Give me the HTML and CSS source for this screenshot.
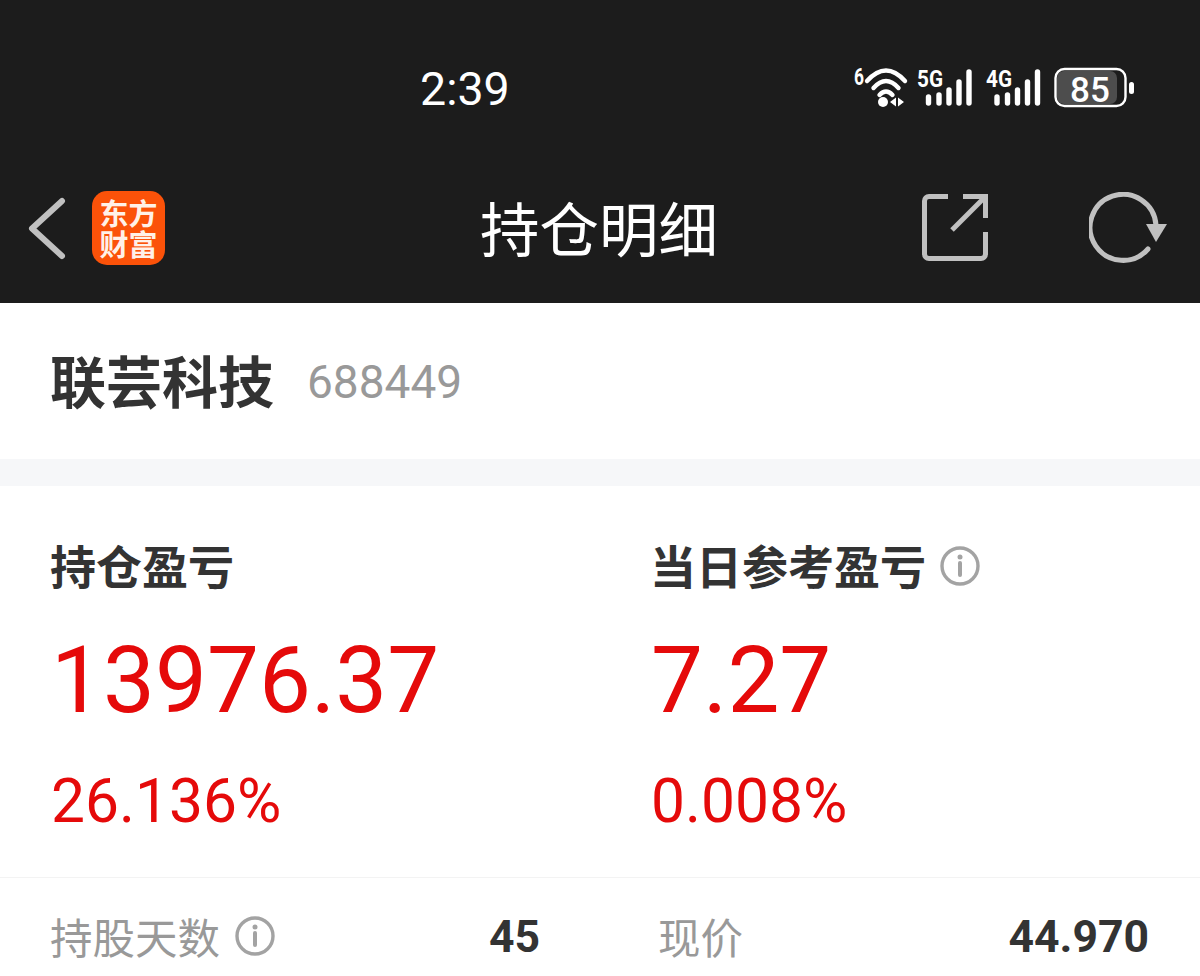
FILE: index.html
```html
<!DOCTYPE html>
<html lang="zh-CN">
<head>
<meta charset="utf-8">
<title>持仓明细</title>
<link rel="stylesheet" href="styles.css">
</head>
<body>
<header class="top">
  <div class="status">
    <span class="time">2:39</span>
    <svg class="status-icons" width="286" height="49" viewBox="850 63 286 49">
      <g class="sb-text">
        <text x="854" y="85" class="sb-small" textLength="10" lengthAdjust="spacingAndGlyphs">6</text>
        <text x="917" y="87" class="sb-small" textLength="26" lengthAdjust="spacingAndGlyphs">5G</text>
        <text x="986" y="87" class="sb-small" textLength="26" lengthAdjust="spacingAndGlyphs">4G</text>
      </g>
      <g class="wifi">
        <path d="M867 81Q886 60 905 81"/>
        <path d="M873.500 88Q886 74 898.500 88"/>
        <path d="M879.500 95Q886 88 892.500 95"/>
      </g>
      <circle cx="883" cy="102" r="5" fill="#fff"/>
      <path d="M896 97.500V106.500L890 102Z M898 97.500V106.500L904 102Z" fill="#fff"/>
      <g class="bars">
        <path d="M928.500 97V103"/><path d="M939 95V103"/><path d="M949 90V103"/><path d="M959 82V103"/><path d="M969 72V103"/>
        <path d="M997 97V103"/><path d="M1007.500 95V103"/><path d="M1017.500 90V103"/><path d="M1027.500 82V103"/><path d="M1037.500 72V103"/>
      </g>
      <rect x="1057" y="71" width="60" height="33" rx="7" fill="#4d4d4d"/>
      <rect x="1055.500" y="69" width="70" height="37" rx="9" fill="none" stroke="#fff" stroke-width="2.400"/>
      <text x="1090" y="102" class="sb-batt" text-anchor="middle">85</text>
      <rect x="1129" y="82" width="5" height="12" rx="2.500" fill="#fff"/>
    </svg>
  </div>
  <nav class="nav">
    <svg class="back" width="40" height="64" viewBox="26 196 40 64">
      <path d="M62 201L32 228.500L62 256"/>
    </svg>
    <div class="logo">东方财富</div>
    <h1 class="title">持仓明细</h1>
    <svg class="share" width="70" height="70" viewBox="920 193 70 70">
      <path d="M948 197.500H929A4.500 4.500 0 0 0 924.500 202V255A4.500 4.500 0 0 0 929 259.500H981A4.500 4.500 0 0 0 985.500 255V233"/>
      <path d="M963 197.500H985.500V219"/>
      <path d="M952 231L984 199"/>
    </svg>
    <svg class="refresh" width="80" height="72" viewBox="1089 193 80 72">
      <path d="M1156 226A33 33 0 1 0 1148 250"/>
      <polygon points="1146,225 1167,225 1156,243"/>
    </svg>
  </nav>
</header>

<section class="stock">
  <span class="stock-name">联芸科技</span>
  <span class="stock-code">688449</span>
</section>

<section class="pnl">
  <div class="pnl-col">
    <div class="pnl-label">持仓盈亏</div>
    <div class="pnl-value">13976.37</div>
    <div class="pnl-pct">26.136%</div>
  </div>
  <div class="pnl-col">
    <div class="pnl-label">当日参考盈亏
      <svg class="info info-pnl" width="40" height="40" viewBox="0 0 40 40"><circle cx="20" cy="20" r="18"/><circle class="info-dot" cx="20" cy="11" r="2.500"/><path d="M20 17V29"/></svg>
    </div>
    <div class="pnl-value">7.27</div>
    <div class="pnl-pct">0.008%</div>
  </div>
</section>

<section class="details">
  <div class="detail detail-left">
    <span class="detail-label">持股天数
      <svg class="info" width="40" height="40" viewBox="0 0 40 40"><circle cx="20" cy="20" r="18"/><circle class="info-dot" cx="20" cy="11" r="2.500"/><path d="M20 17V29"/></svg>
    </span>
    <span class="detail-value">45</span>
  </div>
  <div class="detail detail-right">
    <span class="detail-label">现价</span>
    <span class="detail-value">44.970</span>
  </div>
</section>
</body>
</html>
```
FILE: styles.css
```css
html, body {
  margin: 0;
  padding: 0;
}
body {
  width: 1200px;
  height: 976px;
  overflow: hidden;
  background: #fff;
  font-family: Roboto, "Noto Sans CJK SC", sans-serif;
}
.top {
  background: #1c1c1c;
  height: 303px;
}
.status {
  height: 178px;
  display: flex;
  align-items: flex-start;
  padding: 0 64px 0 420px;
  box-sizing: border-box;
}
.time {
  margin-top: 60px;
  font: 450 46.500px/58px Roboto, sans-serif;
  color: #fff;
}
.status-icons {
  margin-left: auto;
  margin-top: 63px;
}
.sb-small {
  font: 700 24px Roboto, sans-serif;
  fill: #fff;
}
.sb-batt {
  font: 500 35px Roboto, sans-serif;
  fill: #fff;
}
.wifi path {
  fill: none;
  stroke: #fff;
  stroke-width: 4.400;
  stroke-linecap: round;
}
.bars path {
  fill: none;
  stroke: #fff;
  stroke-width: 5.400;
  stroke-linecap: round;
}
.nav {
  height: 125px;
  box-sizing: border-box;
  padding: 0 0 22px 26px;
  display: flex;
  align-items: center;
}
.back {
  margin-top: -3px;
}
.back path {
  fill: none;
  stroke: #c0c0c0;
  stroke-width: 6;
  stroke-linecap: round;
  stroke-linejoin: round;
}
.logo {
  margin-left: 26px;
  width: 73px;
  height: 74px;
  margin-top: -3px;
  padding: 6px 7px;
  box-sizing: border-box;
  border-radius: 15px;
  background: #fb5209;
  color: #fff1e8;
  text-align: center;
  font: 700 29px/31px "Noto Sans CJK SC", sans-serif;
}
.title {
  margin: -8px 0 0 315px;
  width: 238px;
  font: 400 59.500px/80px "Noto Sans CJK SC", sans-serif;
  color: #fff;
  white-space: nowrap;
}
.share {
  margin-left: 202px;
  margin-top: -5px;
}
.share path {
  fill: none;
  stroke: #c0c0c0;
  stroke-width: 5;
}
.refresh {
  margin-left: 99px;
  margin-top: -3px;
}
.refresh path {
  fill: none;
  stroke: #c0c0c0;
  stroke-width: 5;
  stroke-linecap: round;
}
.refresh polygon {
  fill: #c0c0c0;
}
.stock {
  height: 156px;
  box-sizing: border-box;
  padding: 0 50px 5px;
  display: flex;
  align-items: center;
  gap: 33px;
}
.stock-name {
  font: 700 56px/70px "Noto Sans CJK SC", sans-serif;
  color: #333;
}
.stock-code {
  margin-top: 6px;
  font: 400 46px/60px Roboto, sans-serif;
  color: #999;
}
.pnl {
  border-top: 27px solid #f6f7f9;
  border-bottom: 1px solid #f3f3f3;
  height: 419px;
  box-sizing: border-box;
  display: grid;
  grid-template-columns: 601px 1fr;
  padding: 46px 0 0 50px;
}
.pnl-col:last-child {
  margin-left: -1px;
}
.pnl-label {
  font: 700 46px/64px "Noto Sans CJK SC", sans-serif;
  color: #333;
  display: flex;
  align-items: center;
  gap: 14px;
}
.info-pnl {
  margin-top: 3px;
}
.pnl-value {
  margin-top: 30px;
  margin-left: 1px;
  font: 400 92.500px/110px Roboto, sans-serif;
  color: #e50a0a;
}
.pnl-pct {
  margin-top: 31px;
  margin-left: 1px;
  font: 400 60.500px/70px Roboto, sans-serif;
  color: #e50a0a;
}
.info circle {
  fill: none;
  stroke: #a3a3a3;
  stroke-width: 3.400;
}
.info .info-dot {
  fill: #a3a3a3;
  stroke: none;
}
.info path {
  stroke: #a3a3a3;
  stroke-width: 4;
  stroke-linecap: round;
}
.details {
  display: grid;
  grid-template-columns: 490px 491px;
  column-gap: 118px;
  padding: 32px 0 0 50px;
}
.detail {
  display: flex;
  align-items: center;
  justify-content: space-between;
  height: 54px;
}
.detail-label {
  display: flex;
  align-items: center;
  gap: 15px;
  margin-top: -3px;
  font: 400 42.500px/54px "Noto Sans CJK SC", sans-serif;
  color: #999;
}
.detail-value {
  font: 700 44.500px/54px Roboto, sans-serif;
  color: #333;
}
```
